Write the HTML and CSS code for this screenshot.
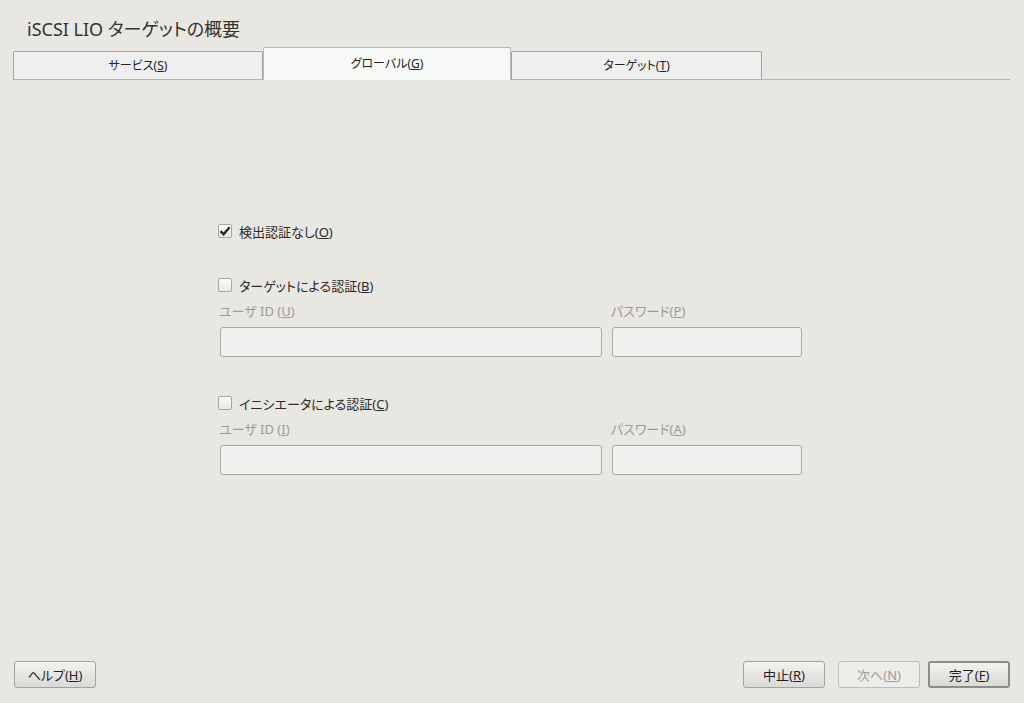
FILE: index.html
```html
<!DOCTYPE html>
<html>

<head>
  <title>iSCSI LIO ターゲットの概要</title>
  <link rel="stylesheet" href="styles.css">
</head>

<body>
  <div class="window">
    <h1 class="title">iSCSI LIO ターゲットの概要</h1>

    <!-- tab bar -->
    <div class="tabs">
      <div class="tab">サービス(<u>S</u>)</div>
      <div class="tab active">グローバル(<u>G</u>)</div>
      <div class="tab">ターゲット(<u>T</u>)</div>
    </div>

    <div class="content">
      <div class="auth-form">
        <label class="check-row">
          <span class="checkbox checked">
            <svg viewBox="0 0 14 14" width="14" height="14">
              <path d="M2.5 7.2 L5.6 10.3 L11.6 3.2" fill="none" stroke="#262626" stroke-width="2.4" />
            </svg>
          </span>
          <span>検出認証なし(<u>O</u>)</span>
        </label>

        <div class="auth-group">
          <label class="check-row">
            <span class="checkbox"></span>
            <span>ターゲットによる認証(<u>B</u>)</span>
          </label>
          <div class="fields">
            <div class="field">
              <span class="field-label">ユーザ ID (<u>U</u>)</span>
              <input type="text" class="text-input" disabled>
            </div>
            <div class="field">
              <span class="field-label">パスワード(<u>P</u>)</span>
              <input type="password" class="text-input" disabled>
            </div>
          </div>
        </div>

        <div class="auth-group">
          <label class="check-row">
            <span class="checkbox"></span>
            <span>イニシエータによる認証(<u>C</u>)</span>
          </label>
          <div class="fields">
            <div class="field">
              <span class="field-label">ユーザ ID (<u>I</u>)</span>
              <input type="text" class="text-input" disabled>
            </div>
            <div class="field">
              <span class="field-label">パスワード(<u>A</u>)</span>
              <input type="password" class="text-input" disabled>
            </div>
          </div>
        </div>
      </div>
    </div>

    <!-- bottom buttons -->
    <div class="footer">
      <button class="btn">ヘルプ(<u>H</u>)</button>
      <div class="footer-right">
        <button class="btn">中止(<u>R</u>)</button>
        <button class="btn disabled">次へ(<u>N</u>)</button>
        <button class="btn default">完了(<u>F</u>)</button>
      </div>
    </div>
  </div>
</body>

</html>
```

FILE: styles.css
```css
/* Base */
body {
  margin: 0;
  font-family: "Noto Sans", "Noto Sans CJK JP", sans-serif;
  font-size: 13px;
  font-feature-settings: "palt";
  background-color: #e8e7e1;
  color: #2a2a2a;
}

.window {
  height: 703px;
  display: flex;
  flex-direction: column;
}

/* Title */
.title {
  margin: 0;
  padding: 16px 0 0 27px;
  height: 31px;
  font-size: 18px;
  font-weight: normal;
  line-height: 26px;
  color: #333;
}

/* Tabs */
.tabs {
  display: flex;
  align-items: flex-end;
  height: 32px;
  margin: 0 14px 0 13px;
  border-bottom: 1px solid #b4b4b0;
}

.tab {
  box-sizing: border-box;
  width: 250px;
  height: 29px;
  margin-bottom: -1px;
  border: 1px solid #a4a4a2;
  border-bottom-color: #b4b4b0;
  border-radius: 2px 2px 0 0;
  background-color: #efefef;
  font-size: 12px;
  line-height: 28px;
  text-align: center;
  color: #222;
}

.tab.active {
  width: 248px;
  height: 33px;
  background-color: #f6f9f6;
  border-color: #b8b8b6;
  border-bottom-color: #f6f9f6;
  line-height: 31px;
}

.tab:last-child {
  width: 251px;
}

/* Content */
.content {
  flex: 1;
  padding-top: 143px;
}

.auth-form {
  margin-left: 218px;
  width: 584px;
}

.check-row {
  display: flex;
  align-items: center;
  gap: 7px;
  height: 16px;
  color: #2a2a2a;
}

.checkbox {
  box-sizing: border-box;
  width: 14px;
  height: 14px;
  border: 1px solid #a6a6a4;
  border-radius: 2px;
  background: linear-gradient(#fbfbfb, #e9e9e7);
  display: flex;
}

.checkbox svg {
  margin: -1px;
}

.auth-group {
  margin-top: 38px;
}

.auth-group + .auth-group {
  margin-top: 38px;
}

.fields {
  display: grid;
  grid-template-columns: 382px 190px;
  column-gap: 10px;
  padding-left: 2px;
  margin-top: 10px;
}

.field {
  display: flex;
  flex-direction: column;
}

.field-label {
  height: 16px;
  line-height: 16px;
  color: #9b9b98;
  margin-left: -1px;
}

.text-input {
  box-sizing: border-box;
  height: 30px;
  margin: 8px 0 0;
  border: 1px solid #a9a9a7;
  border-radius: 3px;
  background-color: #eef1ee;
}

/* Footer */
.footer {
  display: flex;
  justify-content: space-between;
  align-items: flex-end;
  padding: 0 14px 15px 14px;
}

.footer-right {
  display: flex;
  gap: 8px;
}

.btn {
  box-sizing: border-box;
  width: 82px;
  height: 27px;
  padding: 0;
  border: 1px solid #a2a2a0;
  border-radius: 3px;
  background: linear-gradient(#f2f2f1, #d9d9d6);
  font-family: "Noto Sans", "Noto Sans CJK JP", sans-serif;
  font-size: 13px;
  font-feature-settings: "palt";
  color: #1e1e1e;
}

.footer-right .btn:first-child {
  margin-right: 5px;
}

.btn.disabled {
  background: #ecece9;
  border-color: #bdbdba;
  color: #9c9c99;
}

.btn.default {
  border: 2px solid #8c8c8a;
}
```
